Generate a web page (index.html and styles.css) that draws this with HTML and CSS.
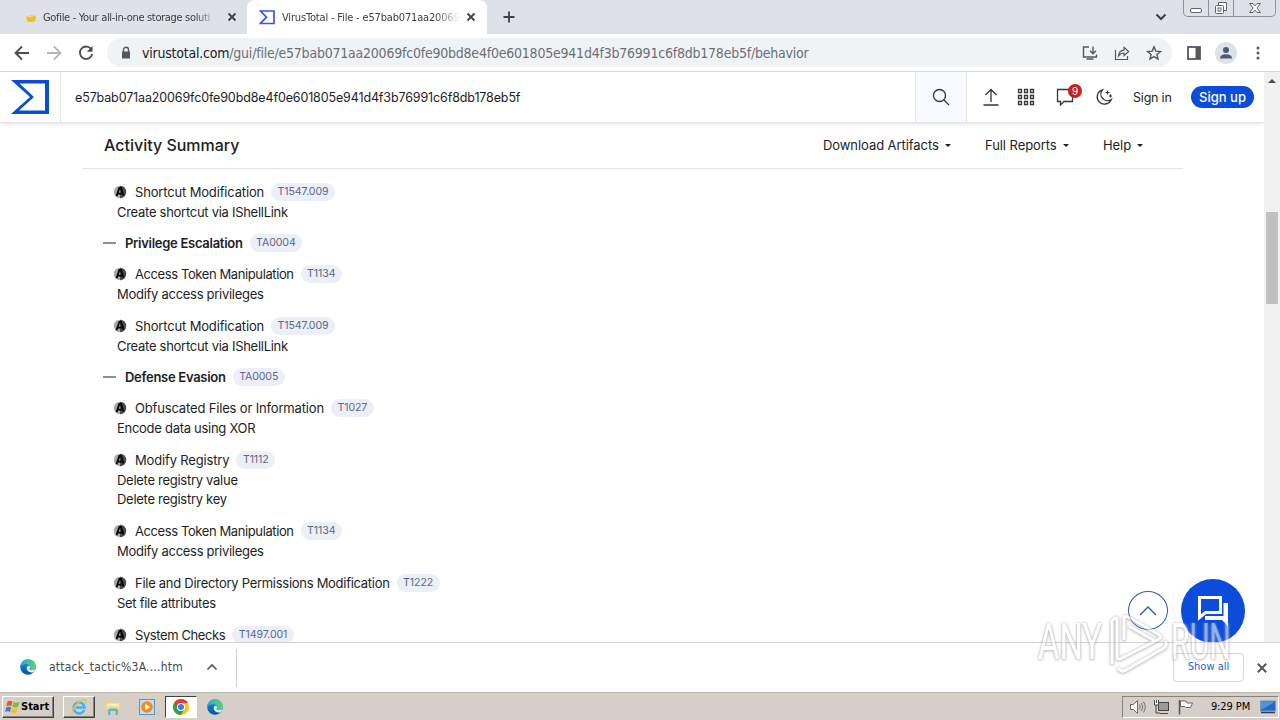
FILE: index.html
```html
<!DOCTYPE html>
<html lang="en">
<head>
    <meta charset="UTF-8">
    <meta name="viewport" content="width=device-width, initial-scale=1.0">
    <title>VirusTotal - File</title>
    <link rel="stylesheet" href="styles.css">
</head>
<body>
    <svg class="defs" width="0" height="0">
        <defs>
            <linearGradient id="edgeBlue" x1="0" y1="0" x2="0" y2="1">
                <stop offset="0" stop-color="#1b9de2"/>
                <stop offset="1" stop-color="#0c4f9e"/>
            </linearGradient>
            <linearGradient id="edgeGreen" x1="0" y1="0" x2="1" y2="0">
                <stop offset="0" stop-color="#2aa9e0"/>
                <stop offset="1" stop-color="#5fd36a"/>
            </linearGradient>
            <symbol id="edge" viewBox="0 0 16 16">
                <circle cx="8" cy="8" r="7.8" fill="url(#edgeBlue)"/>
                <path d="M.3 7.500C.8 3 4 .2 8 .2c4.600 0 7.800 3.300 7.800 7 0 2.600-2 3.900-4.200 3.900-1.600 0-2.400-.6-2-1.200 1.400-2.200.1-4.600-3-4.600-2.600 0-5 .6-6.300 2.200z" fill="url(#edgeGreen)"/>
                <path d="M9.600 9.600c-.5.900.3 1.600 2 1.600 1.900 0 3.300-.6 4.100-1.700-.5 1.500-1.300 2.900-2.600 4-3 .2-6.400-1.300-6.400-4.500 0-1 .5-1.900 1.500-2.300 2 .2 2.300 1.700 1.400 2.900z" fill="#fff" opacity=".9"/>
            </symbol>
            <symbol id="attack" viewBox="0 0 14 14">
                <circle cx="7" cy="7" r="6.200" fill="#a9a9a9"/>
                <path d="M7 .8a6.200 6.200 0 0 1 0 12.400z" fill="#4c4c4c"/>
                <path d="M3.500 11.200 6.400 3h1.600l2.500 7.500M4.700 8.600h4.600" fill="none" stroke="#050505" stroke-width="1.900"/>
            </symbol>
        </defs>
    </svg>

    <!-- Browser tabs -->
    <div class="tabstrip">
        <div class="tab">
            <svg class="tab-icon" viewBox="0 0 16 16"><path d="M3 7.500 12 6l2 1-.5 4.500c-2 2-6.500 2-8.300.4L4.500 9z" fill="#f0bf24"/><path d="M1 6.500 7 8l6-1.800" stroke="#e8dcae" fill="none"/></svg>
            <span class="tab-title">Gofile - Your all-in-one storage soluti</span>
            <svg class="tab-close" viewBox="0 0 10 10"><path d="M1.500 1.500l7 7M8.500 1.500l-7 7"/></svg>
        </div>
        <div class="tab active">
            <svg class="tab-icon" viewBox="0 0 16 16"><path d="M1.500 2H15v12.500H1.500L7.500 8.200z" fill="#fff" stroke="#3558e6" stroke-width="1.700"/></svg>
            <span class="tab-title">VirusTotal - File - e57bab071aa20069</span>
            <svg class="tab-close" viewBox="0 0 10 10"><path d="M1.500 1.500l7 7M8.500 1.500l-7 7"/></svg>
        </div>
        <svg class="new-tab" viewBox="0 0 12 12"><path d="M6 .5v11M.5 6h11"/></svg>
        <svg class="tab-search" viewBox="0 0 12 8"><path d="M1.500 1.500 6 6l4.500-4.500"/></svg>
        <div class="window-buttons">
            <span class="wb"><svg viewBox="0 0 14 14"><rect x="1.500" y="7.500" width="11" height="4" rx="1.500"/></svg></span>
            <span class="wb"><svg viewBox="0 0 14 14"><path d="M4.500 4.500v-3h8v8h-3"/><rect x="1.500" y="4.500" width="8" height="8" rx="1"/><rect x="4" y="7" width="3" height="3"/></svg></span>
            <span class="wb wide"><svg viewBox="0 0 14 14"><path d="M1.500 2.500h3.500L7 4.800l2-2.300h3.500L9 7l3.500 4.500H9L7 9.200 5 11.500H1.500L5 7z"/></svg></span>
        </div>
    </div>

    <!-- Toolbar -->
    <div class="toolbar">
        <svg class="nav-icon" viewBox="0 0 16 16"><path d="M15 8H2M8 1.500 1.500 8 8 14.500"/></svg>
        <svg class="nav-icon off" viewBox="0 0 16 16"><path d="M1 8h13M8 1.500 14.500 8 8 14.500"/></svg>
        <svg class="nav-icon" viewBox="0 0 16 16"><path d="M13.500 4.600A6.200 6.200 0 1 0 14.200 9"/><path d="M14.500 1v5.700H8.800z" fill="#4a4d51" stroke="none"/></svg>
        <div class="omnibox">
            <svg class="lock" viewBox="0 0 10 14"><path d="M1 5.500h8v7H1z" fill="#54585d"/><path d="M2.500 6V3.800a2.500 2.500 0 0 1 5 0V6" fill="none" stroke="#54585d" stroke-width="1.400"/></svg>
            <div class="url"><span class="host">virustotal.com</span><span class="path">/gui/file/e57bab071aa20069fc0fe90bd8e4f0e601805e941d4f3b76991c6f8db178eb5f/behavior</span></div>
            <svg class="omni-icon" viewBox="0 0 16 16"><path d="M7 2H1.500v10h13V9.500M4.500 14h7M11 1.500v7M8 5.800l3 3 3-3"/></svg>
            <svg class="omni-icon" viewBox="0 0 16 16"><path d="M1.500 5v9.500h12V11M4.500 11c.3-3.500 2-5.500 5.500-5.800V2.300l4.700 4.200-4.700 4.200V8C7.500 8 6 8.800 4.500 11z" stroke-width="1.200"/></svg>
            <svg class="omni-icon" viewBox="0 0 16 16"><path d="M8 1.800l1.800 4.300 4.700.4-3.600 3 1.100 4.600L8 11.600 4 14.100l1.100-4.600-3.600-3 4.700-.4z"/></svg>
        </div>
        <svg class="side-panel" viewBox="0 0 14 14"><rect x="1" y="1" width="12" height="12" fill="#fff" stroke="#54585d" stroke-width="1.800"/><path d="M8.500 1H13v12H8.500z" fill="#54585d"/></svg>
        <svg class="avatar" viewBox="0 0 22 22"><circle cx="11" cy="11" r="11" fill="#dde1e8"/><circle cx="11" cy="8" r="3" fill="#4d5b78"/><path d="M5 16.500c0-3 3-4.300 6-4.300s6 1.300 6 4.300z" fill="#4d5b78"/></svg>
        <svg class="dots" viewBox="0 0 4 16"><circle cx="2" cy="3" r="1.500"/><circle cx="2" cy="8" r="1.500"/><circle cx="2" cy="13" r="1.500"/></svg>
    </div>

    <div class="viewport">
        <div class="page">
            <header class="vt-header">
                <div class="logo"><svg viewBox="0 0 38 34"><path d="M0 0h38v34H0l19-17zM8.500 3.500 23 17 8 30.500h26v-27z" fill="#0b4dda" fill-rule="evenodd"/></svg></div>
                <div class="hash">e57bab071aa20069fc0fe90bd8e4f0e601805e941d4f3b76991c6f8db178eb5f</div>
                <div class="search"><svg viewBox="0 0 18 18"><circle cx="7.500" cy="7.500" r="6"/><path d="M12 12l5 5"/></svg></div>
                <div class="actions">
                    <svg class="act upload" viewBox="0 0 18 18"><path d="M9 14V1.500M3.500 7 9 1.500 14.500 7M1.500 17h15"/></svg>
                    <svg class="act grid" viewBox="0 0 18 18"><path d="M1.500 1.500h3v3h-3zM7.500 1.500h3v3h-3zM13.500 1.500h3v3h-3zM1.500 7.500h3v3h-3zM7.500 7.500h3v3h-3zM13.500 7.500h3v3h-3zM1.500 13.500h3v3h-3zM7.500 13.500h3v3h-3zM13.500 13.500h3v3h-3z"/></svg>
                    <div class="notif">
                        <svg class="act" viewBox="0 0 18 18"><path d="M1.500 1.500h15v12H8L4.500 17v-3.500h-3z"/></svg>
                        <span class="badge">9</span>
                    </div>
                    <svg class="act moon" viewBox="0 0 18 18"><path d="M7.500 1.800A7.300 7.300 0 1 0 16.300 11.500 6.600 6.600 0 0 1 7.500 1.800z"/><path d="M12.500 2.500v4M10.500 4.500h4M15.500 6.500v3M14 8h3" stroke-width="1.200"/></svg>
                    <span class="sign-in">Sign in</span>
                    <span class="sign-up">Sign up</span>
                </div>
            </header>

            <div class="summary-bar">
                <h1>Activity Summary</h1>
                <nav>
                    <span class="menu artifacts">Download Artifacts</span>
                    <span class="menu reports">Full Reports</span>
                    <span class="menu help">Help</span>
                </nav>
            </div>

            <div class="tree">
                <div class="technique">
                    <div class="row"><svg class="ico"><use href="#attack"/></svg><span>Shortcut Modification</span><b class="tag">T1547.009</b></div>
                    <p>Create shortcut via IShellLink</p>
                </div>
                <div class="tactic"><i></i><span>Privilege Escalation</span><b class="tag">TA0004</b></div>
                <div class="technique">
                    <div class="row tight"><svg class="ico"><use href="#attack"/></svg><span>Access Token Manipulation</span><b class="tag">T1134</b></div>
                    <p>Modify access privileges</p>
                </div>
                <div class="technique">
                    <div class="row"><svg class="ico"><use href="#attack"/></svg><span>Shortcut Modification</span><b class="tag">T1547.009</b></div>
                    <p>Create shortcut via IShellLink</p>
                </div>
                <div class="tactic"><i></i><span>Defense Evasion</span><b class="tag">TA0005</b></div>
                <div class="technique">
                    <div class="row"><svg class="ico"><use href="#attack"/></svg><span>Obfuscated Files or Information</span><b class="tag">T1027</b></div>
                    <p>Encode data using XOR</p>
                </div>
                <div class="technique">
                    <div class="row"><svg class="ico"><use href="#attack"/></svg><span>Modify Registry</span><b class="tag">T1112</b></div>
                    <p>Delete registry value</p>
                    <p>Delete registry key</p>
                </div>
                <div class="technique">
                    <div class="row tight"><svg class="ico"><use href="#attack"/></svg><span>Access Token Manipulation</span><b class="tag">T1134</b></div>
                    <p>Modify access privileges</p>
                </div>
                <div class="technique">
                    <div class="row snug"><svg class="ico"><use href="#attack"/></svg><span>File and Directory Permissions Modification</span><b class="tag">T1222</b></div>
                    <p>Set file attributes</p>
                </div>
                <div class="technique">
                    <div class="row tight"><svg class="ico"><use href="#attack"/></svg><span>System Checks</span><b class="tag">T1497.001</b></div>
                </div>
            </div>

            <!-- Floating buttons -->
            <div class="to-top"><svg viewBox="0 0 18 10"><path d="M1 9l8-8 8 8"/></svg></div>
            <div class="chat"><svg viewBox="0 0 30 30"><path d="M1.500 1.500h21v15H7.500l-6 5z" fill="none" stroke="#fff" stroke-width="3"/><path d="M25.500 7H30v23l-6-6H7v-4h18.500z" fill="#fff"/></svg></div>
        </div>
        <div class="scrollbar"><div class="up"></div><div class="thumb"></div></div>
    </div>

    <!-- Downloads -->
    <div class="shelf">
        <div class="download">
            <svg class="edge-icon"><use href="#edge"/></svg>
            <span>attack_tactic%3A....htm</span>
            <svg class="chev" viewBox="0 0 12 8"><path d="M1.500 6.500 6 2l4.500 4.500"/></svg>
        </div>
        <span class="show-all">Show all</span>
        <svg class="shelf-close" viewBox="0 0 10 10"><path d="M.8.800l8.400 8.400M9.200.800.800 9.200"/></svg>
    </div>

    <!-- Windows taskbar -->
    <div class="taskbar">
        <div class="start">
            <svg viewBox="0 0 16 16"><path d="M2.500 2.500c2-1.200 3.600-1 5 0L6.400 7.300c-1.600-1-3.200-1-5 0z" fill="#e8552c"/><path d="M8.500 3c1.800 1.100 3.800 1 6 0l-1.300 4.700c-1.900 1-3.900 1-5.700 0z" fill="#7fb93d"/><path d="M1.200 8.500c1.800-1 3.400-1 5 0L5 13c-1.500-1-3-1-5 0z" fill="#3e7fd0"/><path d="M7.200 9c1.800 1 3.800 1 5.700 0l-1.200 4.600c-2 1-4 1-5.700 0z" fill="#f5bd2a"/></svg>
            <span>Start</span>
        </div>
        <div class="task raised"><svg viewBox="0 0 18 18"><path d="M14.200 12A5.500 5.500 0 1 1 14.600 9.500H5.500" fill="none" stroke="#45b2ea" stroke-width="2.600"/><path d="M2.500 16C-.5 14 8 3 13.500 1.800c3-.6 3 1.700 2 3.700" fill="none" stroke="#eec042" stroke-width="1.500"/></svg></div>
        <div class="task"><svg viewBox="0 0 18 18"><path d="M2 3h6l1 2h7v10H2z" fill="#eed079"/><path d="M3 5.500h12V9H3z" fill="#faf0bd"/><path d="M1.500 8h15v3h-15z" fill="#f0dc90"/><path d="M4 17v-4.500q0-2 2-2h6q2 0 2 2V17h-2.500v-4h-5v4z" fill="#62b4dd"/></svg></div>
        <div class="task"><svg viewBox="0 0 18 18"><rect x="1.500" y="1.500" width="15" height="15" fill="#c3dcef" stroke="#5b94c8"/><circle cx="9" cy="9" r="5.800" fill="#f48a1c"/><path d="M7.200 5.800v6.400l5-3.200z" fill="#fff"/></svg></div>
        <div class="task pressed"><svg viewBox="0 0 18 18"><circle cx="9" cy="9" r="8" fill="#fbc61b"/><path d="M2.070 5A8 8 0 0 0 9 17l3.500-6L9 9z" fill="#2da14c"/><path d="M2.070 5A8 8 0 0 1 15.930 5L9 5.500 6 11z" fill="#e33b2e"/><circle cx="9" cy="9" r="4" fill="#fff"/><circle cx="9" cy="9" r="3" fill="#3a7cec"/></svg></div>
        <div class="task"><svg class="small"><use href="#edge"/></svg></div>
        <div class="tray">
            <svg viewBox="0 0 18 16"><path d="M1.500 5.500h3l4-4v13l-4-4h-3z" fill="#fff" stroke="#6c6963"/><path d="M10.500 5.500q1.500 2.500 0 5M12.500 4q2.500 4 0 8M14.500 2.500q3.500 5.500 0 11" fill="none" stroke="#77746e"/></svg>
            <svg viewBox="0 0 18 16"><rect x="5.500" y="3.500" width="10" height="8" fill="#9b9b98" stroke="#444"/><path d="M7 14.500h8M3 6v8h4" fill="none" stroke="#444"/><path d="M1.500 1v5h4V1M3.500 1v3" fill="#fff" stroke="#444"/></svg>
            <svg viewBox="0 0 18 16"><path d="M2.500 1v14.500" stroke="#555" stroke-width="1.500"/><path d="M3.500 2h5.500l1 2h5.500l-2 4.500H9L8 7.500H3.500z" fill="#fff" stroke="#666"/></svg>
            <span>9:29 PM</span>
            <svg class="desk" viewBox="0 0 16 14"><rect x=".5" y="1" width="15" height="10" fill="#2568c4" stroke="#7e97b8"/><path d="M1 1.500h14L3 9H1z" fill="#4f93e2"/><path d="M1 12.500h14" stroke="#27425f" stroke-width="1.500"/></svg>
        </div>
    </div>

    <svg class="watermark" viewBox="0 0 200 70">
        <text x="2" y="53" textLength="64" lengthAdjust="spacingAndGlyphs">ANY</text>
        <text x="135" y="53" textLength="60" lengthAdjust="spacingAndGlyphs">RUN</text>
        <path d="M76 58V16q0-3 5-4v38q0 5 5 2l37-19q4-2-1-5L94 12q-6-4-6 2v20M93 20l26 15M82 62q4 5 8 2l38-22q4-3 1-7" />
    </svg>
</body>
</html>
```

FILE: styles.css
```css
* {
    box-sizing: border-box;
}
body {
    margin: 0;
    width: 1280px;
    height: 720px;
    overflow: hidden;
    position: relative;
    display: flex;
    flex-direction: column;
    background: #fff;
    color: #1d1e24;
    font-family: Inter, "Liberation Sans", sans-serif;
    font-size: 13px;
}
svg {
    display: block;
    flex: none;
}
.defs {
    position: absolute;
}

/* Tabs */
.tabstrip {
    height: 34px;
    flex: none;
    display: flex;
    align-items: center;
    background: #dee1e8;
    font-family: "DejaVu Sans Condensed", "DejaVu Sans", sans-serif;
    font-size: 11px;
    letter-spacing: -0.33px;
    color: #3a3c40;
}
.tab {
    width: 240px;
    height: 34px;
    padding: 0 3px 0 22px;
    display: flex;
    align-items: center;
}
.tab.active {
    padding: 0 11px 0 12px;
    margin-left: 7px;
    background: #fff;
    border-radius: 8px 8px 0 0;
    letter-spacing: -0.17px;
}
.tab-icon {
    width: 16px;
    height: 16px;
}
.tab-title {
    width: 176px;
    margin-left: 5px;
    white-space: nowrap;
    -webkit-mask-image: linear-gradient(90deg, #000 86%, transparent);
    mask-image: linear-gradient(90deg, #000 86%, transparent);
}
.tab.active .tab-title {
    width: 178px;
    margin-left: 7px;
}
.tab-close {
    width: 10px;
    height: 10px;
    margin-left: auto;
    fill: none;
    stroke: #3c4043;
    stroke-width: 1.8;
}
.new-tab {
    width: 12px;
    height: 12px;
    margin-left: 16px;
    stroke: #3c4043;
    stroke-width: 1.8;
}
.tab-search {
    width: 12px;
    height: 8px;
    margin-left: auto;
    fill: none;
    stroke: #3c4043;
    stroke-width: 2;
}
.window-buttons {
    width: 93px;
    height: 17px;
    margin: 0 4px 0 16px;
    align-self: flex-start;
    display: flex;
    border: 1px solid #8c9097;
    border-top: 0;
    border-radius: 0 0 5px 5px;
}
.wb {
    width: 25px;
    display: flex;
    align-items: center;
    justify-content: center;
    border-right: 1px solid #8c9097;
}
.wb.wide {
    width: 41px;
    border: 0;
}
.wb svg {
    width: 14px;
    height: 14px;
    fill: #fff;
    stroke: #5f6368;
}

/* Toolbar */
.toolbar {
    height: 38px;
    flex: none;
    display: flex;
    align-items: center;
    padding: 0 20px 0 14px;
    border-bottom: 1px solid #d5d7da;
}
.nav-icon {
    width: 16px;
    height: 16px;
    margin-right: 16px;
    fill: none;
    stroke: #4a4d51;
    stroke-width: 1.8;
}
.nav-icon.off {
    stroke: #b4b6b9;
}
.omnibox {
    width: 1065px;
    height: 29px;
    margin-left: -3px;
    padding: 0 10px 0 14px;
    display: flex;
    align-items: center;
    border-radius: 15px;
    background: #f0f3f6;
}
.lock {
    width: 10px;
    height: 14px;
}
.url {
    flex: 1;
    margin-left: 11px;
    font-family: "DejaVu Sans Condensed", "DejaVu Sans", sans-serif;
    font-size: 14px;
    white-space: nowrap;
    color: #6b6f74;
    letter-spacing: -0.22px;
}
.host {
    color: #202124;
}
.omni-icon {
    width: 16px;
    height: 16px;
    margin-left: 16px;
    fill: none;
    stroke: #54585d;
    stroke-width: 1.4;
}
.side-panel {
    width: 14px;
    height: 14px;
    margin-left: 15px;
}
.avatar {
    width: 22px;
    height: 22px;
    margin-left: 14px;
}
.dots {
    width: 4px;
    height: 16px;
    margin-left: auto;
    fill: #54585d;
}

/* VirusTotal page */
.viewport {
    height: 570px;
    flex: none;
    display: flex;
}
.page {
    width: 1264px;
    position: relative;
    overflow: hidden;
}
.vt-header {
    height: 51px;
    display: flex;
    border-bottom: 1px solid #e3e5ea;
    box-shadow: 0 1px 4px rgba(0, 0, 0, 0.12);
}
.logo {
    width: 61px;
    padding: 8px 0 0 11px;
    border-right: 1px solid #e0e3e8;
}
.logo svg {
    width: 38px;
    height: 34px;
}
.hash {
    width: 854px;
    padding-left: 14px;
    line-height: 52px;
    font-size: 12.5px;
    letter-spacing: -0.13px;
}
.search {
    width: 52px;
    padding-right: 1px;
    display: flex;
    align-items: center;
    justify-content: center;
    background: #f8faff;
    border: solid #e0e3e8;
    border-width: 0 1px;
}
.search svg {
    width: 18px;
    height: 18px;
    fill: none;
    stroke: #34363c;
    stroke-width: 1.3;
}
.actions {
    flex: 1;
    display: flex;
    align-items: center;
    padding-left: 15px;
}
.act {
    width: 18px;
    height: 18px;
    fill: none;
    stroke: #34363c;
    stroke-width: 1.3;
}
.grid {
    margin-left: 17px;
}
.notif {
    position: relative;
    margin: 0 21px;
}
.badge {
    position: absolute;
    left: 12px;
    top: -4px;
    width: 14px;
    height: 14px;
    border-radius: 50%;
    background: #c91f1f;
    color: #fff;
    font-size: 10px;
    line-height: 14px;
    text-align: center;
}
.sign-in {
    width: 39px;
    margin-left: 20px;
    font-size: 12.5px;
    letter-spacing: -0.2px;
    white-space: nowrap;
}
.sign-up {
    width: 63px;
    height: 22px;
    margin-left: 19px;
    border-radius: 11px;
    background: #0b4dda;
    color: #fff;
    font-size: 13px;
    font-weight: 500;
    line-height: 22px;
    text-align: center;
}
.summary-bar {
    width: 1101px;
    height: 46px;
    margin-left: 82px;
    padding: 0 40px 1px 22px;
    display: flex;
    align-items: center;
    justify-content: space-between;
    border-bottom: 1px solid #e3e4e8;
}
.summary-bar h1 {
    margin: 0;
    font-size: 16px;
    font-weight: 500;
}
.summary-bar nav {
    display: flex;
    gap: 34px;
}
.menu {
    display: flex;
    align-items: center;
    justify-content: space-between;
    white-space: nowrap;
    letter-spacing: -0.07px;
}
.menu::after {
    content: "";
    border: 3px solid transparent;
    border-top-color: #1d1e24;
    border-bottom: 0;
}
.artifacts {
    width: 128px;
}
.reports {
    width: 84px;
}
.help {
    width: 40px;
}

/* Tactics and techniques */
.tree {
    padding: 12.5px 0 0 103px;
}
.technique {
    padding-left: 10px;
    margin-bottom: 11.2px;
}
.row {
    height: 20px;
    margin-bottom: 1px;
    display: flex;
    align-items: center;
    letter-spacing: -0.16px;
}
.row.snug {
    letter-spacing: -0.28px;
}
.row.tight {
    letter-spacing: -0.4px;
}
.ico {
    width: 14px;
    height: 14px;
    margin-right: 8px;
}
.technique p {
    margin: 0 0 0 4px;
    line-height: 19.7px;
    letter-spacing: -0.28px;
}
.tactic {
    height: 20px;
    margin-bottom: 10.3px;
    display: flex;
    align-items: center;
    font-weight: 600;
    letter-spacing: -0.28px;
}
.tactic i {
    width: 13px;
    height: 2px;
    margin-right: 9px;
    background: #8f9094;
}
.tag {
    height: 18px;
    margin-left: 7px;
    padding: 0 6.5px;
    border-radius: 9px;
    background: #eceff8;
    color: #5d6785;
    font-size: 10.6px;
    font-weight: 400;
    letter-spacing: -0.1px;
    line-height: 18px;
}
.to-top {
    position: absolute;
    left: 1128px;
    top: 519px;
    width: 40px;
    height: 39px;
    display: flex;
    align-items: center;
    justify-content: center;
    border: 1px solid #3158b8;
    border-radius: 50%;
    background: #fff;
}
.to-top svg {
    width: 18px;
    height: 10px;
    fill: none;
    stroke: #3158b8;
    stroke-width: 1.4;
}
.chat {
    position: absolute;
    left: 1181px;
    top: 507px;
    width: 64px;
    height: 64px;
    padding: 17px;
    border-radius: 50%;
    background: #0b4dda;
}
.chat svg {
    width: 30px;
    height: 30px;
}
.scrollbar {
    width: 16px;
    display: flex;
    flex-direction: column;
    align-items: center;
    background: #f1f1f1;
}
.up {
    margin: 7px 0 129px;
    border: 4px solid transparent;
    border-bottom-color: #505050;
    border-top: 0;
}
.thumb {
    width: 12px;
    height: 92px;
    background: #c1c1c1;
}

/* Download shelf */
.shelf {
    height: 50px;
    flex: none;
    display: flex;
    align-items: center;
    padding-right: 13px;
    border-top: 1px solid #d0d2d5;
    background: #fff;
    font-family: "DejaVu Sans Condensed", "DejaVu Sans", sans-serif;
}
.download {
    width: 237px;
    height: 38px;
    padding: 0 18px 2px 20px;
    display: flex;
    align-items: center;
    border-right: 1px solid #cfd1d4;
    font-size: 12px;
    letter-spacing: 0.22px;
    color: #45484d;
}
.edge-icon {
    width: 16px;
    height: 16px;
    margin-right: 13px;
}
.chev {
    width: 12px;
    height: 8px;
    margin-left: auto;
    fill: none;
    stroke: #54585d;
    stroke-width: 1.7;
}
.show-all {
    width: 71px;
    height: 29px;
    margin-left: auto;
    border: 1px solid #d5d7db;
    border-radius: 4px;
    color: #2065c4;
    font-size: 11px;
    line-height: 25px;
    text-align: center;
}
.shelf-close {
    width: 10px;
    height: 10px;
    margin-left: 13px;
    stroke: #54585d;
    stroke-width: 2;
}

/* Taskbar */
.taskbar {
    height: 28px;
    flex: none;
    display: flex;
    align-items: center;
    padding: 0 1px 0 2px;
    border-top: 1px solid #b8b5ad;
    background: #d5cfc8;
    font-family: "DejaVu Sans Condensed", "DejaVu Sans", sans-serif;
}
.start {
    width: 52px;
    height: 22px;
    padding-left: 2px;
    display: flex;
    align-items: center;
    border: 1px solid;
    border-color: #fff #404040 #404040 #fff;
    box-shadow: inset -1px -1px #86827b;
    font-size: 11px;
    font-weight: 700;
    color: #000;
}
.start svg {
    width: 16px;
    height: 16px;
}
.start + .task {
    margin-left: 9px;
}
.task {
    width: 32px;
    height: 22px;
    margin-right: 2px;
    display: flex;
    align-items: center;
    justify-content: center;
}
.task svg {
    width: 18px;
    height: 18px;
}
.task svg.small {
    width: 16px;
    height: 16px;
}
.raised {
    border: 1px solid;
    border-color: #fff #404040 #404040 #fff;
    box-shadow: inset -1px -1px #86827b;
}
.pressed {
    background: #fff;
    border: 1px solid;
    border-color: #404040 #fff #fff #404040;
}
.tray {
    width: 157px;
    height: 22px;
    margin-left: auto;
    padding: 0 2px 0 6px;
    display: flex;
    align-items: center;
    border: 1px solid;
    border-color: #86827b #fff #fff #86827b;
    font-size: 11px;
    letter-spacing: -0.1px;
    color: #000;
}
.tray svg {
    width: 18px;
    height: 16px;
    margin-right: 6px;
}
.tray span {
    margin: 0 auto;
}
.tray svg.desk {
    width: 16px;
    height: 14px;
    margin-right: 0;
}

/* Recording watermark */
.watermark {
    position: absolute;
    left: 1036px;
    top: 606px;
    width: 200px;
    height: 70px;
    opacity: 0.55;
    fill: #fff;
    font-family: Roboto, sans-serif;
    font-size: 50px;
    filter: drop-shadow(0 0 1px #888) drop-shadow(0 1px 1px #aaa);
}
.watermark path {
    fill: none;
    stroke: #fff;
    stroke-width: 3;
}
```
